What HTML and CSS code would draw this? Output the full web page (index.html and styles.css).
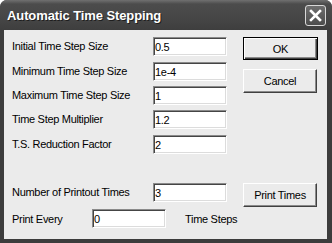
FILE: index.html
```html
<!DOCTYPE html>
<html lang="en">
<head>
    <meta charset="UTF-8">
    <meta name="viewport" content="width=device-width, initial-scale=1.0">
    <title>Automatic Time Stepping</title>
    <link rel="stylesheet" href="styles.css">
</head>
<body>
    <div class="dialog">
        <div class="titlebar">
            <span class="title">Automatic Time Stepping</span>
            <button class="close" type="button">
                <svg width="19" height="19" viewBox="0 0 19 19">
                    <path d="M5 5 L14 14 M14 5 L5 14" stroke="#fff" stroke-width="2.6" stroke-linecap="square"/>
                </svg>
            </button>
        </div>

        <form class="content">
            <div class="grid">
                <label for="initStep">Initial Time Step Size</label>
                <input type="text" id="initStep" value="0.5">
                <div class="buttons">
                    <button type="submit" class="btn btn-default">OK</button>
                    <button type="button" class="btn">Cancel</button>
                </div>

                <label for="minStep">Minimum Time Step Size</label>
                <input type="text" id="minStep" value="1e-4">

                <label for="maxStep">Maximum Time Step Size</label>
                <input type="text" id="maxStep" value="1">

                <label for="multiplier">Time Step Multiplier</label>
                <input type="text" id="multiplier" value="1.2">

                <label for="reduction">T.S. Reduction Factor</label>
                <input type="text" id="reduction" value="2">

                <label for="printouts">Number of Printout Times</label>
                <input type="text" id="printouts" value="3">
                <button type="button" class="btn btn-print">Print Times</button>
            </div>

            <div class="every-row">
                <label for="printEvery">Print Every</label>
                <input type="text" id="printEvery" value="0">
                <span class="steps">Time Steps</span>
            </div>
        </form>
    </div>
</body>
</html>
```

FILE: styles.css
```css
body {
    margin: 0;
    padding: 0;
    background: #fff;
    font-family: "Liberation Sans", Arial, sans-serif;
    font-size: 11px;
    letter-spacing: -0.3px;
    color: #000;
}
.dialog {
    width: 332px;
    height: 243px;
    display: flex;
    flex-direction: column;
    background: #3c3c3c;
    border-radius: 7px 7px 0 0;
    overflow: hidden;
}
.titlebar {
    height: 30px;
    display: flex;
    align-items: center;
    padding: 0 6px 0 7px;
    background: linear-gradient(#707070, #4c4c4c 4px, #454545 20px, #3e3e3e);
}
.title {
    flex: 1;
    color: #fff;
    font-weight: bold;
    font-size: 13px;
    letter-spacing: -0.1px;
    text-shadow: 1px 1px 0 #1e1e1e;
    padding-top: 1px;
}
.close {
    width: 21px;
    height: 21px;
    padding: 0;
    border: 1px solid #d8d8d8;
    border-radius: 3px;
    background: linear-gradient(#6e6e6e, #4c4c4c);
    display: flex;
    align-items: center;
    justify-content: center;
}
.content {
    flex: 1;
    margin: 0 5px 4px 4px;
    padding: 7px 0 0 8px;
    background: #ebebeb;
}
.grid {
    display: grid;
    grid-template-columns: 141px 74px 16px 75px;
    grid-template-rows: 25px 24px 24px 25px 48px 26px;
    align-items: start;
}
.grid label {
    grid-column: 1;
    line-height: 19px;
}
.grid input {
    grid-column: 2;
}
input {
    box-sizing: border-box;
    width: 74px;
    height: 19px;
    margin: 0;
    padding: 0 0 0 1px;
    font-family: inherit;
    font-size: 11px;
    letter-spacing: inherit;
    background: #fff;
    border: 1px solid;
    border-color: #8a8a8a #fff #fff #8a8a8a;
    box-shadow: inset 1px 1px 0 #454545, inset -1px -1px 0 #dcdcdc;
    outline: none;
}
.buttons {
    grid-column: 4;
    grid-row: 1 / span 3;
    display: flex;
    flex-direction: column;
    gap: 9px;
}
.btn {
    box-sizing: border-box;
    width: 74px;
    height: 24px;
    padding: 0;
    font-family: inherit;
    font-size: 11px;
    letter-spacing: inherit;
    color: #000;
    background: #ebebeb;
    border: 1px solid;
    border-color: #fff #404040 #404040 #fff;
    box-shadow: inset -1px -1px 0 #8a8a8a;
}
.btn-default {
    width: 75px;
    height: 23px;
    border: 1px solid #000;
    box-shadow: inset 1px 1px 0 #fff, inset -1px -1px 0 #404040, inset -2px -2px 0 #8a8a8a;
}
.btn-print {
    grid-column: 4;
    grid-row: 6;
}
.every-row {
    display: flex;
    align-items: center;
}
.every-row label {
    width: 80px;
}
.steps {
    margin-left: 19px;
}
```
